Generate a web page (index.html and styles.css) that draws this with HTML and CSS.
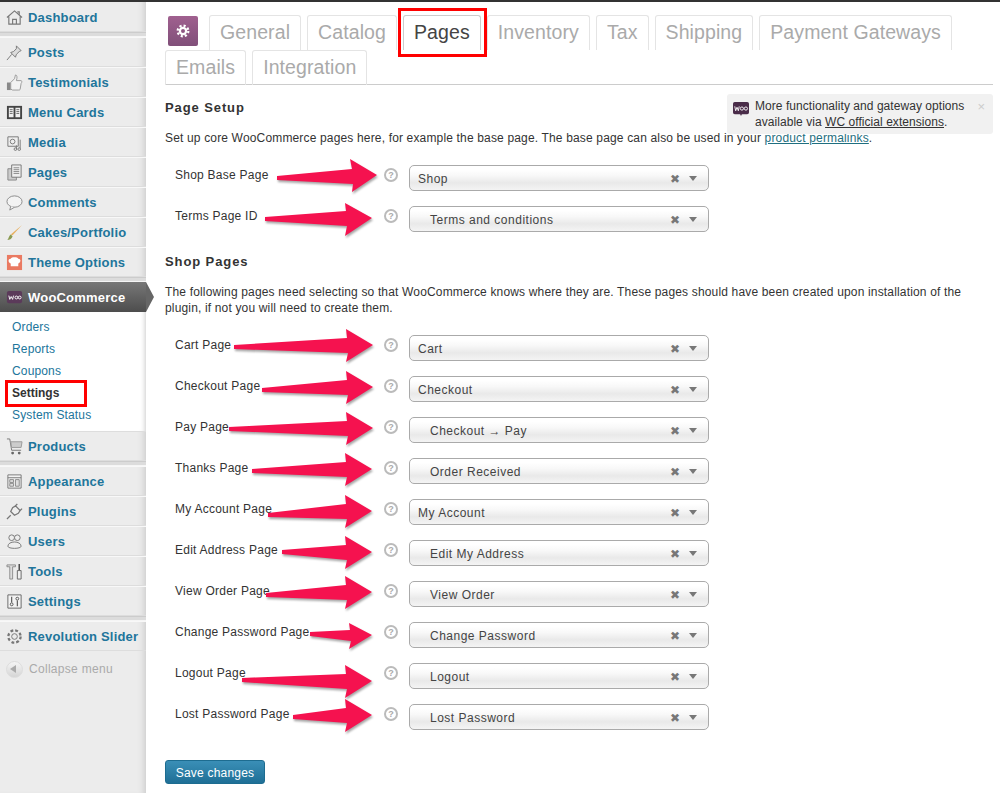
FILE: index.html
```html
<!DOCTYPE html>
<html>

<head>
    <title>WooCommerce Settings</title>
    <link rel="stylesheet" href="styles.css">
</head>

<body>
    <div class="topbar"></div>
    <div class="layout">
        <!-- Admin menu -->
        <nav class="sidebar">
            <a class="menu-item menu-first"><svg class="menu-icon" viewBox="0 0 18 18"><path d="M1 9 9 2l8 7M3 8v8h12V8M7 16v-5h4v5M12 3h2v3" fill="none" stroke="#777" stroke-width="1.2"/></svg>Dashboard</a>
            <div class="menu-sep"></div>
            <a class="menu-item"><svg class="menu-icon" viewBox="0 0 18 18"><path d="M11 2l5 5-2 1-3 3-1 3-5-5 3-1 3-3zM6 11l-5 6" fill="#ddd" stroke="#777"/></svg>Posts</a>
            <a class="menu-item"><svg class="menu-icon" viewBox="0 0 18 18"><path d="M1 9h4v8H1z" fill="#888"/><path d="M5 9l4-4 1-4c2 0 2 3 1 6h5c1 0 1 2 0 3l-1 6c0 1-1 1-2 1H7l-2-1z" fill="#f3f3f3" stroke="#999"/></svg>Testimonials</a>
            <a class="menu-item"><svg class="menu-icon" viewBox="0 0 18 18"><path d="M1 2h16v14H1z" fill="#444"/><path d="M3 4h5v10H3zM10 4h5v10h-5z" fill="#eee"/><path d="M4 6h3M4 8h3M4 10h3M11 6h3M11 8h3M11 10h3" stroke="#666"/></svg>Menu Cards</a>
            <a class="menu-item"><svg class="menu-icon" viewBox="0 0 18 18"><path d="M2 3h11v10H2z" fill="#eee" stroke="#777"/><circle cx="7" cy="8" r="2.500" fill="none" stroke="#777"/><path d="M15 6v9M11 12v4" stroke="#777"/><circle cx="10" cy="16" r="1.400" fill="none" stroke="#777"/><circle cx="14" cy="16" r="1.400" fill="none" stroke="#777"/></svg>Media</a>
            <a class="menu-item"><svg class="menu-icon" viewBox="0 0 18 18"><path d="M2 5h9v12H2z" fill="#ccc" stroke="#888"/><path d="M6 1h10v13H6z" fill="#eee" stroke="#777"/><path d="M8 4h6M8 6h6M8 8h6M8 10h6" stroke="#888"/></svg>Pages</a>
            <a class="menu-item"><svg class="menu-icon" viewBox="0 0 18 18"><ellipse cx="9" cy="8" rx="8" ry="6" fill="#f3f3f3" stroke="#888"/><path d="M5 13l-1 4 5-3" fill="#f3f3f3" stroke="#888"/></svg>Comments</a>
            <a class="menu-item"><svg class="menu-icon" viewBox="0 0 18 18"><path d="M17 1 7 12l-2-1z" fill="#e8b060"/><path d="M5 11l2 2c-1 3-3 4-6 4 2-1 2-5 4-6z" fill="#8a9a50"/></svg>Cakes/Portfolio</a>
            <a class="menu-item"><svg class="menu-icon" viewBox="0 0 18 18"><path d="M1 1h16v16H1z" fill="#ea7a62"/><path d="M5 13V10C2 9 2 5 5 5c1-2 7-2 8 0 3 0 3 4 0 5v3z" fill="#fff"/></svg>Theme Options</a>
            <div class="menu-sep"></div>
            <a class="menu-item menu-current"><svg class="menu-icon" viewBox="0 0 18 18"><rect x="1" y="2" width="16" height="13" rx="2" fill="#5b3a5a"/><path d="M3 7l1 4 1.500-3 1.500 3 1-4" fill="none" stroke="#fff"/><circle cx="11" cy="9" r="1.500" fill="none" stroke="#fff"/><circle cx="14.500" cy="9" r="1.500" fill="none" stroke="#fff"/></svg>WooCommerce</a>
            <ul class="submenu">
                <li>Orders</li>
                <li>Reports</li>
                <li>Coupons</li>
                <li class="submenu-current">Settings</li>
                <li>System Status</li>
            </ul>
            <a class="menu-item menu-after-sub"><svg class="menu-icon" viewBox="0 0 18 18"><path d="M1 1h3l2 12h10" fill="none" stroke="#777"/><path d="M5 4h12l-1 6H6z" fill="#ccc" stroke="#999"/><circle cx="7" cy="16" r="1.500" fill="#666"/><circle cx="14" cy="16" r="1.500" fill="#666"/></svg>Products</a>
            <div class="menu-sep"></div>
            <a class="menu-item"><svg class="menu-icon" viewBox="0 0 18 18"><path d="M2 2h14v14H2z" fill="#f3f3f3" stroke="#777"/><path d="M2 5h14" stroke="#777"/><path d="M4 7h4v3H4zM4 11h4v3H4zM10 7h4v7h-4z" fill="#ddd" stroke="#888"/></svg>Appearance</a>
            <a class="menu-item"><svg class="menu-icon" viewBox="0 0 18 18"><path d="M1 17l4-4M5 9l4 4 4-2 2-3-5-5-3 2zM9 4l3-3M14 9l3-3" fill="#eee" stroke="#777" stroke-width="1.300"/></svg>Plugins</a>
            <a class="menu-item"><svg class="menu-icon" viewBox="0 0 18 18"><circle cx="6" cy="5" r="3" fill="#eee" stroke="#777"/><circle cx="12" cy="5" r="3" fill="#eee" stroke="#777"/><path d="M2 14c0-6 14-6 14 0 0 3-14 3-14 0z" fill="#eee" stroke="#777"/></svg>Users</a>
            <a class="menu-item"><svg class="menu-icon" viewBox="0 0 18 18"><path d="M1 2h9v2H7v13H4V4H1z" fill="#ddd" stroke="#777" stroke-width=".8"/><path d="M14 1v7" stroke="#444" stroke-width="1.500"/><path d="M12 8h4v9h-4z" fill="#eee" stroke="#666"/></svg>Tools</a>
            <a class="menu-item"><svg class="menu-icon" viewBox="0 0 18 18"><path d="M2 2h14v14H2z" fill="#f3f3f3" stroke="#666"/><path d="M6 4v6M12 8v6" stroke="#555" stroke-width="1.200"/><circle cx="6" cy="12" r="1.500" fill="none" stroke="#555"/><circle cx="12" cy="6" r="1.500" fill="none" stroke="#555"/></svg>Settings</a>
            <div class="menu-sep"></div>
            <a class="menu-item"><svg class="menu-icon" viewBox="0 0 18 18"><circle cx="9" cy="9" r="3" fill="none" stroke="#777"/><circle cx="9" cy="9" r="6.500" fill="none" stroke="#777" stroke-width="2.400" stroke-dasharray="3 2.100"/></svg>Revolution Slider</a>
            <div class="collapse"><span class="collapse-btn"></span>Collapse menu</div>
        </nav>

        <main class="content">
            <!-- Settings tabs -->
            <div class="tabs">
                <span class="tabs-icon"><svg viewBox="0 0 18 18" width="16" height="16"><circle cx="9" cy="9" r="3.500" fill="none" stroke="#fff" stroke-width="2.500"/><circle cx="9" cy="9" r="6" fill="none" stroke="#fff" stroke-width="2.500" stroke-dasharray="2.400 2.300"/></svg></span>
                <a class="tab">General</a>
                <a class="tab">Catalog</a>
                <a class="tab tab-active">Pages</a>
                <a class="tab">Inventory</a>
                <a class="tab">Tax</a>
                <a class="tab">Shipping</a>
                <a class="tab">Payment Gateways</a>
                <a class="tab">Emails</a>
                <a class="tab">Integration</a>
            </div>

            <div class="notice">
                <svg class="notice-icon" viewBox="0 0 18 18"><path d="M2 1h14a2 2 0 0 1 2 2v10a2 2 0 0 1-2 2h-6l-1 2-1-2H2a2 2 0 0 1-2-2V3a2 2 0 0 1 2-2z" fill="#4a2c49"/><path d="M2 6l1 5 1.500-4 1.500 4 1-5" fill="none" stroke="#fff"/><circle cx="10" cy="8.500" r="1.800" fill="none" stroke="#fff"/><circle cx="14.500" cy="8.500" r="1.800" fill="none" stroke="#fff"/></svg>
                <p>More functionality and gateway options available via <u>WC official extensions</u>.</p>
                <span class="notice-close">&times;</span>
            </div>

            <h3>Page Setup</h3>
            <p class="intro">Set up core WooCommerce pages here, for example the base page. The base page can also be used in your <a href="#">product permalinks</a>.</p>

            <div class="field"><label>Shop Base Page</label><span class="help">?</span><div class="select">Shop<i class="clear">&#10006;</i><i class="caret"></i></div></div>
            <div class="field"><label>Terms Page ID</label><span class="help">?</span><div class="select child">Terms and conditions<i class="clear">&#10006;</i><i class="caret"></i></div></div>

            <h3 class="h-shop">Shop Pages</h3>
            <p class="intro">The following pages need selecting so that WooCommerce knows where they are. These pages should have been created upon installation of the plugin, if not you will need to create them.</p>

            <div class="field"><label>Cart Page</label><span class="help">?</span><div class="select">Cart<i class="clear">&#10006;</i><i class="caret"></i></div></div>
            <div class="field"><label>Checkout Page</label><span class="help">?</span><div class="select">Checkout<i class="clear">&#10006;</i><i class="caret"></i></div></div>
            <div class="field"><label>Pay Page</label><span class="help">?</span><div class="select child">Checkout &rarr; Pay<i class="clear">&#10006;</i><i class="caret"></i></div></div>
            <div class="field"><label>Thanks Page</label><span class="help">?</span><div class="select child">Order Received<i class="clear">&#10006;</i><i class="caret"></i></div></div>
            <div class="field"><label>My Account Page</label><span class="help">?</span><div class="select">My Account<i class="clear">&#10006;</i><i class="caret"></i></div></div>
            <div class="field"><label>Edit Address Page</label><span class="help">?</span><div class="select child">Edit My Address<i class="clear">&#10006;</i><i class="caret"></i></div></div>
            <div class="field"><label>View Order Page</label><span class="help">?</span><div class="select child">View Order<i class="clear">&#10006;</i><i class="caret"></i></div></div>
            <div class="field"><label>Change Password Page</label><span class="help">?</span><div class="select child">Change Password<i class="clear">&#10006;</i><i class="caret"></i></div></div>
            <div class="field"><label>Logout Page</label><span class="help">?</span><div class="select child">Logout<i class="clear">&#10006;</i><i class="caret"></i></div></div>
            <div class="field"><label>Lost Password Page</label><span class="help">?</span><div class="select child">Lost Password<i class="clear">&#10006;</i><i class="caret"></i></div></div>

            <button class="save">Save changes</button>
        </main>
    </div>

    <!-- Annotation arrows drawn over the screenshot -->
    <svg class="arrows" viewBox="0 0 1000 793" width="1000" height="793">
        <polygon points="277,176 352,169 350,159 377,175 352,192 353,184 277,180"/>
        <polygon points="265,217 346,211 345,203 372,218 345,236 347,226 265,221"/>
        <polygon points="234,345 347,338 346,329 373,345 346,362 348,353 234,349"/>
        <polygon points="262,388 347,380 346,371 373,387 346,404 348,395 262,392"/>
        <polygon points="229,427 347,421 346,412 373,428 346,445 348,436 229,431"/>
        <polygon points="252,469 346,462 345,453 372,469 345,486 347,477 252,473"/>
        <polygon points="268,513 346,504 345,495 372,511 345,528 347,519 268,517"/>
        <polygon points="282,550 346,545 345,536 372,552 345,569 347,560 282,554"/>
        <polygon points="266,593 346,585 345,576 372,592 345,609 347,600 266,597"/>
        <polygon points="310,632 350,630 349,623 372,635 349,649 351,641 310,636"/>
        <polygon points="242,678 346,674 345,665 372,681 345,698 347,689 242,682"/>
        <polygon points="293,715 346,708 345,699 372,715 345,732 347,723 293,719"/>
    </svg>
</body>

</html>
```

FILE: styles.css
```css
* {
    box-sizing: border-box;
}

html,
body {
    height: 793px;
    margin: 0;
    overflow: hidden;
}

body {
    position: relative;
    font-family: 'Liberation Sans', Arial, sans-serif;
    font-size: 12px;
    color: #333;
    background: #fff;
}

.topbar {
    height: 2px;
    background: #333;
}

.layout {
    display: flex;
    height: 791px;
}

/* Sidebar */
.sidebar {
    width: 146px;
    flex-shrink: 0;
    background: #ececec;
    box-shadow: inset -7px 0 6px -5px #ccc;
}

.menu-item {
    display: flex;
    align-items: center;
    height: 30px;
    padding-left: 6px;
    font-size: 13px;
    font-weight: 700;
    letter-spacing: 0.2px;
    color: #21759b;
    border-bottom: 1px solid #ddd;
    border-top: 1px solid #f8f8f8;
}

.menu-first {
    height: 30px;
    padding-top: 2px;
    border-top: 0;
}

.menu-icon {
    width: 17px;
    height: 17px;
    margin-right: 5px;
    flex-shrink: 0;
}

.menu-sep {
    height: 5px;
    background: #dcdcdc;
    border-top: 1px solid #ccc;
    border-bottom: 1px solid #f5f5f5;
}

.menu-current {
    position: relative;
    color: #fff;
    background: linear-gradient(#777, #4d4d4d);
    border: 0;
}

.menu-current::after {
    content: "";
    position: absolute;
    left: 146px;
    top: 0;
    border-left: 8px solid #666;
    border-top: 15px solid transparent;
    border-bottom: 15px solid transparent;
}

.submenu {
    list-style: none;
    margin: 0;
    padding: 4px 0 5px 12px;
    height: 119px;
    background: #fff;
    box-shadow: inset -5px 0 5px -4px #ccc;
    color: #21759b;
    letter-spacing: 0.15px;
}

.submenu li {
    height: 22px;
    line-height: 22px;
}

.submenu-current {
    position: relative;
    font-weight: 700;
    color: #333;
    letter-spacing: 0;
}

.submenu-current::after {
    content: "";
    position: absolute;
    left: -7px;
    top: -2px;
    width: 76px;
    height: 21px;
    border: 3px solid #f00;
}

.menu-after-sub {
    border-top: 1px solid #ddd;
}

.collapse {
    display: flex;
    align-items: center;
    height: 36px;
    padding-left: 6px;
    color: #aaa;
    font-size: 12px;
    letter-spacing: 0.3px;
}

.collapse-btn {
    position: relative;
    width: 17px;
    height: 17px;
    margin-right: 6px;
    border-radius: 50%;
    background: linear-gradient(#f5f5f5, #d5d5d5);
    border: 1px solid #ddd;
}

.collapse-btn::after {
    content: "";
    position: absolute;
    left: 3px;
    top: 3px;
    border-right: 6px solid #aaa;
    border-top: 4px solid transparent;
    border-bottom: 4px solid transparent;
}

/* Content */
.content {
    position: relative;
    flex: 1;
    padding: 13px 7px 0 19px;
}

.tabs {
    display: flex;
    flex-wrap: wrap;
    gap: 0 6px;
    height: 70px;
    border-bottom: 1px solid #ccc;
}

.tabs-icon {
    display: flex;
    align-items: center;
    justify-content: center;
    width: 30px;
    height: 30px;
    margin: 1px 5px 0 3px;
    border-radius: 2px;
    background: linear-gradient(#a0608f, #804f79);
}

.tab {
    position: relative;
    height: 35px;
    padding: 0 10px;
    line-height: 33px;
    font-size: 19.5px;
    letter-spacing: 0.1px;
    color: #aaa;
    border: 1px solid #e4e4e4;
    border-bottom: 0;
    border-radius: 3px 3px 0 0;
}

.tab-active {
    color: #444;
    border-color: #ccc;
}

.tab-active::after {
    content: "";
    position: absolute;
    left: -6px;
    right: -7px;
    top: -8px;
    height: 43px;
    border: 3px solid #f00;
}

.notice {
    position: absolute;
    left: 581px;
    top: 92px;
    display: flex;
    width: 266px;
    height: 40px;
    padding: 4px 6px;
    border-radius: 3px;
    background: #f1f1f1;
}

.notice-icon {
    width: 16px;
    height: 18px;
    margin: 2px 6px 0 0;
    flex-shrink: 0;
}

.notice p {
    margin: 0;
    width: 220px;
    line-height: 16px;
    letter-spacing: 0.05px;
}

.notice-close {
    position: absolute;
    right: 8px;
    top: 5px;
    font-size: 13px;
    color: #ccc;
}

h3 {
    margin: 15px 0 0;
    font-size: 13px;
    line-height: 16px;
    letter-spacing: 0.9px;
}

.h-shop {
    margin-top: 7px;
}

.intro {
    margin: 14px 0 19px;
    line-height: 16px;
    letter-spacing: 0.16px;
}

.intro a {
    color: #1f6f80;
}

.field {
    display: grid;
    grid-template-columns: 209px 25px 300px;
    height: 41px;
    padding-left: 10px;
}

.field label {
    padding-top: 2px;
    line-height: 16px;
    letter-spacing: 0.25px;
}

.help {
    width: 14px;
    height: 14px;
    margin-top: 3px;
    border: 2px solid #bbb;
    border-radius: 50%;
    font-size: 9px;
    font-weight: 700;
    line-height: 10px;
    text-align: center;
    color: #aaa;
}

.select {
    position: relative;
    height: 26px;
    padding-left: 8px;
    line-height: 26px;
    letter-spacing: 0.5px;
    color: #444;
    border: 1px solid #aaa;
    border-radius: 5px;
    background: linear-gradient(#fff 15%, #f8f8f8 40%, #e9e9e9 70%, #f4f4f4);
}

.child {
    padding-left: 20px;
}

.clear {
    position: absolute;
    left: 260px;
    top: 0;
    font-size: 12px;
    font-style: normal;
    letter-spacing: 0;
    color: #777;
}

.caret {
    position: absolute;
    left: 279px;
    top: 10px;
    border-top: 5px solid #777;
    border-left: 4px solid transparent;
    border-right: 4px solid transparent;
}

.save {
    display: block;
    width: 100px;
    height: 24px;
    margin-top: 15px;
    padding: 1px 0 0;
    font-family: inherit;
    font-size: 12px;
    letter-spacing: 0.2px;
    color: #fff;
    border: 1px solid #1d6c90;
    border-radius: 3px;
    background: linear-gradient(#3a8fb7, #1f6f96);
}

/* Annotation overlay */
.arrows {
    position: absolute;
    left: 0;
    top: 0;
    pointer-events: none;
}

.arrows polygon {
    fill: #f5124f;
    filter: drop-shadow(1px 2px 1px rgba(0, 0, 0, 0.35));
}
```
